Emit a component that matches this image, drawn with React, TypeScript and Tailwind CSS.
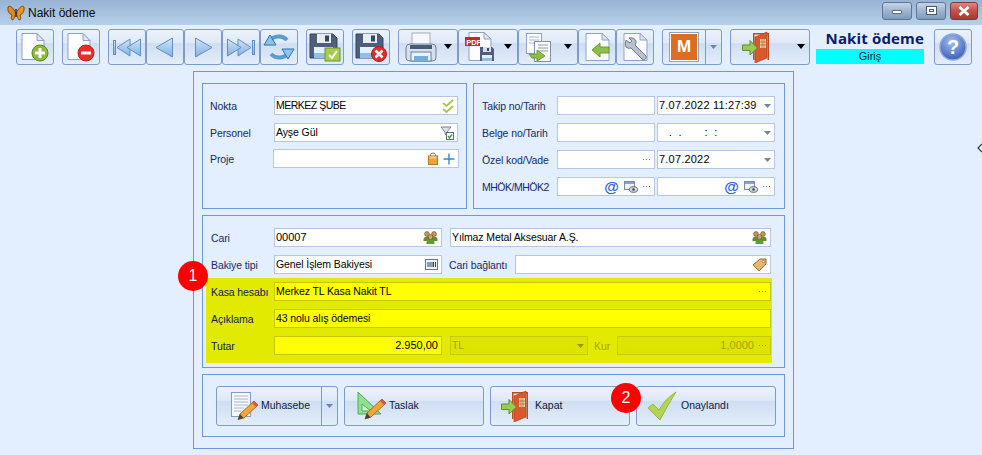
import React from "react";

const font = { fontFamily: '"Liberation Sans", sans-serif' };

const PageBase = ({ x = 4 }: { x?: number }) => (
  <>
    <path d={`M${x} 1.5H${x + 15}L${x + 22} 8.5V27.5H${x}Z`} fill="#fbfdff" stroke="#8fa3c4" />
    <path d={`M${x + 15} 1.5V8.5H${x + 22}Z`} fill="#dfe7f3" stroke="#8fa3c4" />
  </>
);

const NewIcon = () => (
  <svg width="30" height="30" viewBox="0 0 30 30">
    <PageBase x={2} />
    <circle cx="20" cy="21" r="8" fill="#8cbc3a" stroke="#5b8a1e" />
    <path d="M20 16V26M15 21H25" stroke="#fff" strokeWidth="3" />
  </svg>
);
const DelIcon = () => (
  <svg width="30" height="30" viewBox="0 0 30 30">
    <PageBase x={2} />
    <circle cx="20" cy="21" r="8" fill="#ee2b2b" stroke="#c51c1c" />
    <path d="M15 21H25" stroke="#fff" strokeWidth="3" />
  </svg>
);
const Arrow = ({ kind }: { kind: "first" | "prev" | "next" | "last" }) => {
  const p = { fill: "url(#nav)", stroke: "#5f8fc5" };
  return (
    <svg width="30" height="24" viewBox="0 0 30 24">
      <defs>
        <linearGradient id="nav" x1="0" y1="0" x2="0" y2="1">
          <stop offset="0" stopColor="#d3e5f8" />
          <stop offset="1" stopColor="#7fb0e3" />
        </linearGradient>
      </defs>
      {kind === "first" && (
        <>
          <rect x="1.5" y="5.5" width="2" height="14" {...p} />
          <path d="M5 12.5L18 4V21Z" {...p} />
          <path d="M15 12.5L28.5 4V21Z" {...p} />
        </>
      )}
      {kind === "prev" && <path d="M6 12.5L22.5 3V22Z" {...p} />}
      {kind === "next" && <path d="M24 12.5L7.5 3V22Z" {...p} />}
      {kind === "last" && (
        <>
          <rect x="26.5" y="5.5" width="2" height="14" {...p} />
          <path d="M25 12.5L12 4V21Z" {...p} />
          <path d="M15 12.5L1.5 4V21Z" {...p} />
        </>
      )}
    </svg>
  );
};
const RefreshIcon = () => (
  <svg width="32" height="30" viewBox="0 0 32 30">
    <path d="M5 12A11 10 0 0 1 24 8" fill="none" stroke="#5a9bd0" strokeWidth="4" />
    <path d="M27 18A11 10 0 0 1 8 22" fill="none" stroke="#5a9bd0" strokeWidth="4" />
    <path d="M1 13L7 3L13 13Z" fill="#8cc3ec" stroke="#2f73ae" />
    <path d="M19 17H31L25 27Z" fill="#8cc3ec" stroke="#2f73ae" />
  </svg>
);
const Disk = ({ badge }: { badge: "ok" | "x" }) => (
  <svg width="32" height="30" viewBox="0 0 32 30">
    <path d="M1 2H24L28 6V26H1Z" fill="#4f5d7f" stroke="#394662" />
    <rect x="8" y="2" width="14" height="9" fill="#e7ecf3" />
    <rect x="16" y="3.5" width="4" height="6" fill="#39465f" />
    <rect x="5" y="15" width="19" height="11" fill="#e4f0fb" />
    <rect x="5" y="21" width="19" height="5" fill="#8fc1e8" />
    {badge === "ok" ? (
      <>
        <rect x="16" y="16" width="15" height="13" fill="#a6cd4c" stroke="#6d9326" />
        <path d="M20 23L23 26L28 19" stroke="#fff" strokeWidth="2" fill="none" />
      </>
    ) : (
      <>
        <circle cx="24" cy="22" r="7.5" fill="#e02c2c" stroke="#b31919" />
        <path d="M20.5 18.5L27.5 25.5M27.5 18.5L20.5 25.5" stroke="#fff" strokeWidth="2.6" />
      </>
    )}
  </svg>
);
const Caret = () => (
  <svg width="8" height="5" viewBox="0 0 8 5" className="shrink-0">
    <path d="M0 0H8L4 5Z" fill="#000" />
  </svg>
);
const PrinterIcon = () => (
  <svg width="32" height="30" viewBox="0 0 32 30">
    <rect x="7" y="1" width="18" height="12" fill="#f5f7fa" stroke="#a3acbc" />
    <path d="M5 12H27Q31 12 31 16V26Q31 29 27 29H5Q1 29 1 26V16Q1 12 5 12Z" fill="#d5e0ee" stroke="#6f7e98" />
    <rect x="5" y="13" width="22" height="4" fill="#4a5876" />
    <rect x="6" y="20" width="20" height="9" fill="#e9f3fb" stroke="#6f7e98" />
    <rect x="9" y="24" width="14" height="5" fill="#6fb0e4" />
  </svg>
);
const PdfIcon = () => (
  <svg width="30" height="30" viewBox="0 0 30 30">
    <path d="M4 0.5H19L26 7V28.5H4Z" fill="#fbfdff" stroke="#8fa3c4" />
    <path d="M19 0.5V7H26Z" fill="#dfe7f3" stroke="#8fa3c4" />
    <rect x="0" y="5" width="15" height="9" fill="#c62828" />
    <text x="1.2" y="12.5" fontSize="7.5" fontWeight="700" fill="#fff" fontFamily="Liberation Sans">PDF</text>
    <path d="M15 15H27L29 17V29H15Z" fill="#4f5d7f" />
    <rect x="18" y="15" width="8" height="5" fill="#d7dde7" />
    <rect x="22" y="16" width="2" height="3" fill="#39465f" />
    <rect x="17" y="23" width="10" height="6" fill="#e4f0fb" />
    <rect x="17" y="26" width="10" height="3" fill="#8fc1e8" />
  </svg>
);
const ExportIcon = () => (
  <svg width="30" height="30" viewBox="0 0 30 30">
    <rect x="1.5" y="1.5" width="15" height="20" fill="#fbfdff" stroke="#8fa3c4" />
    <path d="M4 5H14M4 8H14M4 11H14" stroke="#a9b6c9" />
    <rect x="9.5" y="9.5" width="16" height="20" fill="#fbfdff" stroke="#7f90ae" />
    <path d="M13 13H23M13 16H23M13 19H23" stroke="#8a98ae" />
    <path d="M4 22H12V18L20 24L12 29V26H7Z" fill="#8ebf48" stroke="#6d9a2c" />
  </svg>
);
const ImportIcon = () => (
  <svg width="30" height="30" viewBox="0 0 30 30">
    <path d="M4 1.5H20L27 8V28.5H4Z" fill="#fbfdff" stroke="#8fa3c4" />
    <path d="M20 1.5V8H27Z" fill="#dfe7f3" stroke="#8fa3c4" />
    <path d="M27 15H18V11L10 18L18 25V21H27Z" fill="#8ebf48" stroke="#6d9a2c" />
  </svg>
);
const WrenchDoc = () => (
  <svg width="30" height="30" viewBox="0 0 30 30">
    <path d="M4 1.5H20L27 8V28.5H4Z" fill="#fbfdff" stroke="#8fa3c4" />
    <path d="M20 1.5V8H27Z" fill="#dfe7f3" stroke="#8fa3c4" />
    <path d="M6 8L10 11L12 9L9 6Q14 5 16 9Q16.5 11 15 13L26 24Q27 26 25 27.5Q23 28.5 22 27L11 16Q8 17 6 15Q4.5 12 6 8Z" fill="#b8c2cf" stroke="#6c7789" />
  </svg>
);
const DoorIcon = () => (
  <svg width="28" height="32" viewBox="0 0 28 32">
    <path d="M11 2H27V29H25.5V3.5H12.5V29H11Z" fill="#c24a22" />
    <path d="M13 6L25 1V27L13 32Z" fill="#d9592a" stroke="#a83c18" strokeWidth="0.6" />
    <rect x="18" y="8" width="6" height="9" fill="#f1dcae" />
    <path d="M20 8V17M22 8V17M18 11H24M18 14H24" stroke="#b0542b" strokeWidth="0.7" />
    <path d="M0.5 14H8V9.5L15.5 17L8 24V19.5H0.5Z" fill="#97cb55" stroke="#608f2c" />
  </svg>
);
const HelpIcon = () => (
  <svg width="28" height="28" viewBox="0 0 28 28">
    <defs>
      <radialGradient id="hp" cx="0.45" cy="0.3" r="0.8">
        <stop offset="0" stopColor="#a4bff0" />
        <stop offset="1" stopColor="#2a53b3" />
      </radialGradient>
    </defs>
    <circle cx="14" cy="14" r="13" fill="url(#hp)" stroke="#8fa6d4" strokeWidth="1.5" />
    <text x="14" y="21" textAnchor="middle" fontSize="20" fontWeight="700" fill="#fff" fontFamily="Liberation Sans">?</text>
  </svg>
);
const Butterfly = () => (
  <svg width="18" height="16" viewBox="0 0 18 16">
    <path d="M8 6Q3 -1 1 2Q0 8 5 10Q3 15 6 15Q8 13 8.5 9Z" fill="#e08a1e" stroke="#5a3410" strokeWidth="0.7" />
    <path d="M10 6Q15 -1 17 2Q18 8 13 10Q15 15 12 15Q10 13 9.5 9Z" fill="#e8951f" stroke="#5a3410" strokeWidth="0.7" />
    <path d="M9 4V12" stroke="#2b1a08" strokeWidth="1.2" />
  </svg>
);

const DoubleCheck = () => (
  <svg width="12" height="14" viewBox="0 0 12 14">
    <path d="M1 4L4.5 7L11 1M1 10L4.5 13L11 7" fill="none" stroke="#a6c653" strokeWidth="1.8" />
  </svg>
);
const FilterCheck = () => (
  <svg width="14" height="14" viewBox="0 0 14 14">
    <path d="M1 1H11L7 6V10L5 8V6Z" fill="#dfe3e8" stroke="#7b8491" />
    <rect x="6.5" y="6.5" width="7" height="7" fill="#fff" stroke="#5c6b7c" />
    <path d="M8 10L9.5 12L12 8.5" fill="none" stroke="#3e9a3e" strokeWidth="1.3" />
  </svg>
);
const Lock = () => (
  <svg width="10" height="13" viewBox="0 0 10 13">
    <path d="M2.5 4V2.5Q2.5 1 5 1Q7.5 1 7.5 2.5V4" fill="none" stroke="#8a7a5f" />
    <rect x="0.5" y="4" width="9" height="8.5" fill="#eda23a" stroke="#b5761f" />
    <rect x="1.5" y="4.5" width="7" height="2" fill="#f7d08a" />
  </svg>
);
const Plus = () => (
  <svg width="12" height="12" viewBox="0 0 12 12">
    <path d="M6 0.5V11.5M0.5 6H11.5" stroke="#3f86c4" strokeWidth="1.4" />
  </svg>
);
const Dots = ({ color = "#6b7f99" }: { color?: string }) => (
  <svg width="8" height="2" viewBox="0 0 8 2" className="shrink-0">
    <path d="M0 0h1v1H0zM3 0h1v1H3zM6 0h1v1H6z" fill={color} />
  </svg>
);
const At = () => <span className="text-[15px] font-bold leading-none text-[#2a5fd8]">@</span>;
const Eye = () => (
  <svg width="14" height="12" viewBox="0 0 14 12">
    <rect x="0.5" y="0.5" width="10" height="8" fill="#eef2f7" stroke="#7d8ba0" />
    <rect x="1" y="1" width="9" height="2" fill="#7fa3cf" />
    <ellipse cx="9.5" cy="8.5" rx="4.2" ry="2.8" fill="#cfd5dc" stroke="#5a6677" />
    <circle cx="9.5" cy="8.5" r="1.2" fill="#3c4655" />
  </svg>
);
const People = () => (
  <svg width="15" height="13" viewBox="0 0 15 13">
    <circle cx="4" cy="3" r="2.4" fill="#c59a5b" stroke="#5f4a20" strokeWidth="0.6" />
    <circle cx="11" cy="3" r="2.4" fill="#c59a5b" stroke="#5f4a20" strokeWidth="0.6" />
    <path d="M0.5 10V8Q1 5.5 4 5.5Q7 5.5 7.5 8V10Z" fill="#6a8a3a" />
    <path d="M7.5 10V8Q8 5.5 11 5.5Q14 5.5 14.5 8V10Z" fill="#6a8a3a" />
    <circle cx="7.5" cy="6" r="2.4" fill="#d2a766" stroke="#5f4a20" strokeWidth="0.6" />
    <path d="M3.5 13V11.5Q4 8.5 7.5 8.5Q11 8.5 11.5 11.5V13Z" fill="#5f9a35" />
  </svg>
);
const Barcode = () => (
  <svg width="13" height="11" viewBox="0 0 13 11">
    <rect x="0.5" y="0.5" width="12" height="10" fill="#eef3fa" stroke="#5f7797" />
    <path d="M3 3V8M5 3V8M7 3V8M8.5 3V8M10.5 3V8" stroke="#2f405c" />
  </svg>
);
const Tag = () => (
  <svg width="15" height="14" viewBox="0 0 15 14">
    <path d="M1 7L8 1H14V6L7 13Z" fill="#e9b66b" stroke="#9a6d2a" />
    <circle cx="11.5" cy="3.5" r="1.2" fill="#fff" stroke="#7b5a28" strokeWidth="0.6" />
  </svg>
);
const SelCaret = ({ color = "#6b86a8" }: { color?: string }) => (
  <svg width="7" height="4" viewBox="0 0 7 4" className="shrink-0">
    <path d="M0 0H7L3.5 4Z" fill={color} />
  </svg>
);
const MuhasebeIcon = () => (
  <svg width="29" height="30" viewBox="0 0 29 30">
    <rect x="1.5" y="1.5" width="19" height="24" fill="#f6f9fd" stroke="#7f9fc6" />
    <path d="M4 5H18M4 8H18M4 11H18M4 14H18M4 17H14M4 20H11" stroke="#a8b6ca" />
    <path d="M24 10L28 14L14 27L8 28.5L10 23Z" fill="#f2a53a" stroke="#a8701e" />
    <path d="M24 10L28 14L26 16L22 12Z" fill="#d9534f" />
    <path d="M10 23L8 28.5L13.5 27Z" fill="#3c4450" />
  </svg>
);
const TaslakIcon = () => (
  <svg width="30" height="30" viewBox="0 0 30 30">
    <path d="M1 1L24 23H1Z" fill="#8fe08f" stroke="#4faa5a" />
    <path d="M5 13L14 20H5Z" fill="#d6f0d6" stroke="#4faa5a" />
    <path d="M25 8L29 12L14 26L8 28L10 22Z" fill="#f2a53a" stroke="#a8701e" />
    <path d="M25 8L29 12L27 14L23 10Z" fill="#d9534f" />
    <path d="M10 22L8 28L13.5 26.5Z" fill="#3c4450" />
  </svg>
);
const CheckBig = () => (
  <svg width="30" height="30" viewBox="0 0 30 30">
    <path d="M1 17L6 13L12 19Q18 8 29 1Q22 12 13 29Z" fill="#b6d452" stroke="#8aaa36" strokeWidth="0.8" />
  </svg>
);

const Tool = ({ w, children }: { w: string; children: React.ReactNode }) => (
  <div className={`${w} relative flex h-[36px] shrink-0 items-center justify-center rounded-[3px] border border-[#7f9cc6] bg-[linear-gradient(#eaf2fc_0%,#dfe9f7_38%,#cfdef1_40%,#e3edfb_100%)]`}>
    {children}
  </div>
);

const Field = ({
  w,
  text,
  right,
  children,
  yellow,
  disabled,
  textCls = "text-[10.5px] tracking-[-0.1px]",
}: {
  w: string;
  text?: string;
  right?: boolean;
  children?: React.ReactNode;
  yellow?: boolean;
  disabled?: boolean;
  textCls?: string;
}) => (
  <div
    className={`${w} flex h-[19px] shrink-0 items-center gap-[5px] border pl-px pr-[3px] leading-[17px] ${
      disabled
        ? "border-[#c4cc00] bg-[#dde400] text-[#a3a800]"
        : yellow
          ? "border-[#c3cb00] bg-[#ffff00] text-black"
          : "border-[#b4c8e4] bg-white text-black"
    }`}
  >
    <span className={`${textCls} min-w-0 flex-1 whitespace-pre ${right ? "text-right" : ""}`}>{text}</span>
    {children}
  </div>
);

const Label = ({ w, children, dim, dark, cls = "tracking-[-0.1px]" }: { w: string; children: React.ReactNode; dim?: boolean; dark?: boolean; cls?: string }) => (
  <span className={`${w} ${cls} shrink-0 whitespace-nowrap text-[10.5px] leading-[14px] ${dim ? "text-[#a3a800]" : dark ? "text-[#10205a]" : "text-[#15296b]"}`}>{children}</span>
);

const FormBtn = ({ icon, label, gap, pl = "pl-[12px]" }: { icon: React.ReactNode; label: string; gap: string; pl?: string }) => (
  <div className={`flex h-[40px] w-[140px] shrink-0 items-center ${gap} ${pl} rounded-[3px] border border-[#7f9cc6] bg-[linear-gradient(#eaf2fc_0%,#dfe9f7_35%,#cfdef1_38%,#e3edfb_100%)] text-[10.5px] text-[#0a1a40]`}>
    {icon}
    <span>{label}</span>
  </div>
);

const Badge = ({ n, cls }: { n: string; cls: string }) => (
  <div className={`${cls} absolute flex h-[30px] w-[30px] items-center justify-center rounded-full bg-[#ff0000] text-[16px] text-white`}>{n}</div>
);

const WinBtn = ({ w, cls, children }: { w: string; cls: string; children: React.ReactNode }) => (
  <div className={`${w} ${cls} flex h-[18px] items-center justify-center rounded-[3px] border border-[#5f7796]`}>{children}</div>
);

const dateCls = "text-[11px] tracking-[0.2px]";
const numCls = "text-[11px]";

export default function App() {
  return (
    <div className="relative flex h-[455px] w-[982px] flex-col overflow-hidden bg-[#e3effe]" style={font}>
      {/* title bar */}
      <div className="flex h-[25px] shrink-0 items-center bg-[linear-gradient(#97b3d3,#b7cfe9)] pl-[7px] pr-[4px]">
        <Butterfly />
        <span className="ml-[3px] text-[12px] text-[#0c0c0c]">Nakit ödeme</span>
        <div className="-mt-[4px] ml-auto flex gap-[4px]">
          <WinBtn w="w-[30px]" cls="bg-[linear-gradient(#c4d4e6,#9db5d0_50%,#7f9ab8)]">
            <div className="mt-[3px] h-[4px] w-[10px] rounded-[1px] border border-[#5b6a80] bg-white" />
          </WinBtn>
          <WinBtn w="w-[30px]" cls="bg-[linear-gradient(#c4d4e6,#9db5d0_50%,#7f9ab8)]">
            <div className="flex h-[9px] w-[11px] items-center justify-center border border-[#4b5a70] bg-white">
              <div className="h-[3px] w-[5px] border border-[#4b5a70]" />
            </div>
          </WinBtn>
          <WinBtn w="w-[28px]" cls="border-[#7a3a3a] bg-[linear-gradient(#dc8a80,#c25046_50%,#a83a30)]">
            <svg width="12" height="10" viewBox="0 0 12 10">
              <path d="M1.5 1L10.5 9M10.5 1L1.5 9" stroke="#fff" strokeWidth="2.8" />
            </svg>
          </WinBtn>
        </div>
      </div>

      {/* toolbar */}
      <div className="flex h-[46px] shrink-0 items-center pb-[6px] pl-[16px] pt-[3px]">
        <Tool w="w-[38px]"><NewIcon /></Tool>
        <div className="w-[8px]" />
        <Tool w="w-[38px]"><DelIcon /></Tool>
        <div className="w-[8px]" />
        <Tool w="w-[38px]"><Arrow kind="first" /></Tool>
        <Tool w="w-[38px]"><Arrow kind="prev" /></Tool>
        <Tool w="w-[38px]"><Arrow kind="next" /></Tool>
        <Tool w="w-[38px]"><Arrow kind="last" /></Tool>
        <Tool w="w-[38px]"><RefreshIcon /></Tool>
        <div className="w-[8px]" />
        <Tool w="w-[38px]"><Disk badge="ok" /></Tool>
        <div className="w-[8px]" />
        <Tool w="w-[38px]"><Disk badge="x" /></Tool>
        <div className="w-[8px]" />
        <Tool w="w-[60px]"><div className="flex items-center gap-[7px]"><PrinterIcon /><Caret /></div></Tool>
        <Tool w="w-[60px]"><div className="flex items-center gap-[9px]"><PdfIcon /><Caret /></div></Tool>
        <Tool w="w-[60px]"><div className="flex items-center gap-[9px]"><ExportIcon /><Caret /></div></Tool>
        <Tool w="w-[38px]"><ImportIcon /></Tool>
        <Tool w="w-[38px]"><WrenchDoc /></Tool>
        <div className="w-[8px]" />
        <div className="flex h-[36px] w-[60px] shrink-0 rounded-[3px] border border-[#7f9cc6] bg-[linear-gradient(#eaf2fc_0%,#dfe9f7_38%,#cfdef1_40%,#e3edfb_100%)]">
          <div className="flex w-[43px] items-center justify-center border-r border-[#7f9cc6]">
            <div className="flex h-[30px] w-[30px] items-center justify-center border border-[#8fa3c4] bg-white">
              <div className="flex h-[26px] w-[26px] items-center justify-center bg-[#dc6e22] text-[17px] font-bold text-white">M</div>
            </div>
          </div>
          <div className="flex flex-1 items-center justify-center"><SelCaret /></div>
        </div>
        <div className="w-[8px]" />
        <Tool w="w-[80px]"><div className="flex items-center gap-[27px] pl-[6px]"><DoorIcon /><Caret /></div></Tool>
        <div className="flex w-[114px] shrink-0 flex-col items-end self-start">
          <div className="h-[20px] whitespace-nowrap text-[15px] font-bold leading-[20px] tracking-[0.15px] text-[#0a1a6e]" style={{ fontFamily: '"Open Sans", sans-serif' }}>Nakit ödeme</div>
          <div className="mt-[1px] flex h-[15px] w-[108px] items-center justify-center bg-[#00ffff] text-[11px] text-[#0a1a40]">Giriş</div>
        </div>
        <div className="w-[10px]" />
        <Tool w="w-[38px]"><HelpIcon /></Tool>
      </div>

      {/* main */}
      <div className="ml-[193px] flex h-[378px] w-[601px] flex-col gap-[6px] border border-[#6d97d5] px-[8px] pt-[11px]">
        <div className="flex h-[126px] gap-[6px]">
          <div className="flex w-[265px] flex-col gap-[8px] border border-[#6d97d5] pl-[7px] pt-[12px]">
            <div className="flex items-center"><Label w="w-[64px]">Nokta</Label><Field w="w-[184px]" text="MERKEZ ŞUBE" textCls="text-[10.5px] tracking-[-0.5px]"><DoubleCheck /></Field></div>
            <div className="flex items-center"><Label w="w-[64px]">Personel</Label><Field w="w-[184px]" text="Ayşe Gül"><FilterCheck /></Field></div>
            <div className="-mt-px flex items-center"><Label w="w-[63px]">Proje</Label><Field w="w-[186px]"><Lock /><Plus /></Field></div>
          </div>
          <div className="flex flex-1 flex-col gap-[8px] border border-[#6d97d5] pl-[8px] pt-[12px]">
            <div className="flex items-center"><Label w="w-[75px]">Takip no/Tarih</Label><Field w="w-[98px]" /><div className="w-[2px]" /><Field w="w-[118px]" text="7.07.2022 11:27:39" textCls={dateCls}><SelCaret /></Field></div>
            <div className="flex items-center"><Label w="w-[75px]">Belge no/Tarih</Label><Field w="w-[98px]" /><div className="w-[2px]" /><Field w="w-[118px]" text="   .  .       :  :" textCls={dateCls}><SelCaret /></Field></div>
            <div className="flex items-center"><Label w="w-[75px]">Özel kod/Vade</Label><Field w="w-[98px]"><Dots /></Field><div className="w-[2px]" /><Field w="w-[118px]" text="7.07.2022" textCls={dateCls}><SelCaret /></Field></div>
            <div className="flex items-center"><Label w="w-[75px]" cls="tracking-[-0.5px]">MHÖK/MHÖK2</Label><Field w="w-[98px]"><At /><Eye /><Dots /></Field><div className="w-[2px]" /><Field w="w-[118px]"><At /><Eye /><Dots /></Field></div>
          </div>
        </div>

        <div className="flex h-[153px] flex-col border border-[#6d97d5] pl-[3px] pt-[12px]">
          <div className="flex items-center pl-[5px]"><Label w="w-[63px]">Cari</Label><Field w="w-[168px]" text="00007" textCls={numCls}><People /></Field><div className="w-[8px]" /><Field w="w-[321px]" text="Yılmaz Metal Aksesuar A.Ş."><People /></Field></div>
          <div className="mt-[8px] flex items-center pl-[5px]"><Label w="w-[63px]">Bakiye tipi</Label><Field w="w-[168px]" text="Genel İşlem Bakiyesi"><Barcode /></Field><div className="w-[7px]" /><Label w="w-[66px]">Cari bağlantı</Label><Field w="w-[256px]"><Tag /></Field></div>
          <div className="mt-[4px] flex h-[85px] w-[566px] flex-col gap-[8px] bg-[#e1ea00] pl-[5px] pt-[4px]">
            <div className="flex items-center"><Label w="w-[63px]" dark>Kasa hesabı</Label><Field w="w-[497px]" yellow text="Merkez TL Kasa Nakit TL"><Dots color="#8a8f00" /></Field></div>
            <div className="flex items-center"><Label w="w-[63px]" dark>Açıklama</Label><Field w="w-[497px]" yellow text="43 nolu alış ödemesi" /></div>
            <div className="flex items-center"><Label w="w-[63px]" dark>Tutar</Label><Field w="w-[168px]" yellow right text="2.950,00" textCls={numCls} /><div className="w-[8px]" /><Field w="w-[138px]" disabled text="TL"><SelCaret color="#8f9400" /></Field><div className="w-[6px]" /><Label w="w-[23px]" dim>Kur</Label><Field w="w-[154px]" disabled right text="1,0000" textCls={numCls}><Dots color="#a3a800" /></Field></div>
          </div>
        </div>

        <div className="flex h-[63px] items-center gap-[6px] border border-[#6d97d5] pl-[13px]">
          <div className="flex h-[40px] w-[122px] shrink-0 rounded-[3px] border border-[#7f9cc6] bg-[linear-gradient(#eaf2fc_0%,#dfe9f7_35%,#cfdef1_38%,#e3edfb_100%)] text-[10.5px] text-[#0a1a40]">
            <div className="flex w-[105px] items-center gap-[2px] border-r border-[#7f9cc6] pl-[13px]"><MuhasebeIcon /><span>Muhasebe</span></div>
            <div className="flex flex-1 items-center justify-center"><SelCaret /></div>
          </div>
          <FormBtn icon={<TaslakIcon />} label="Taslak" gap="gap-[2px]" />
          <FormBtn icon={<DoorIcon />} label="Kapat" gap="gap-[6px]" pl="pl-[10px]" />
          <FormBtn icon={<CheckBig />} label="Onaylandı" gap="gap-[4px]" pl="pl-[10px]" />
        </div>
      </div>

      <Badge n="1" cls="left-[178px] top-[261px]" />
      <Badge n="2" cls="left-[611px] top-[383px]" />
      <svg width="6" height="10" viewBox="0 0 6 10" className="absolute left-[977px] top-[143px]">
        <path d="M5 1L1 5L5 9" fill="none" stroke="#2b3a55" strokeWidth="1.2" />
      </svg>
    </div>
  );
}
